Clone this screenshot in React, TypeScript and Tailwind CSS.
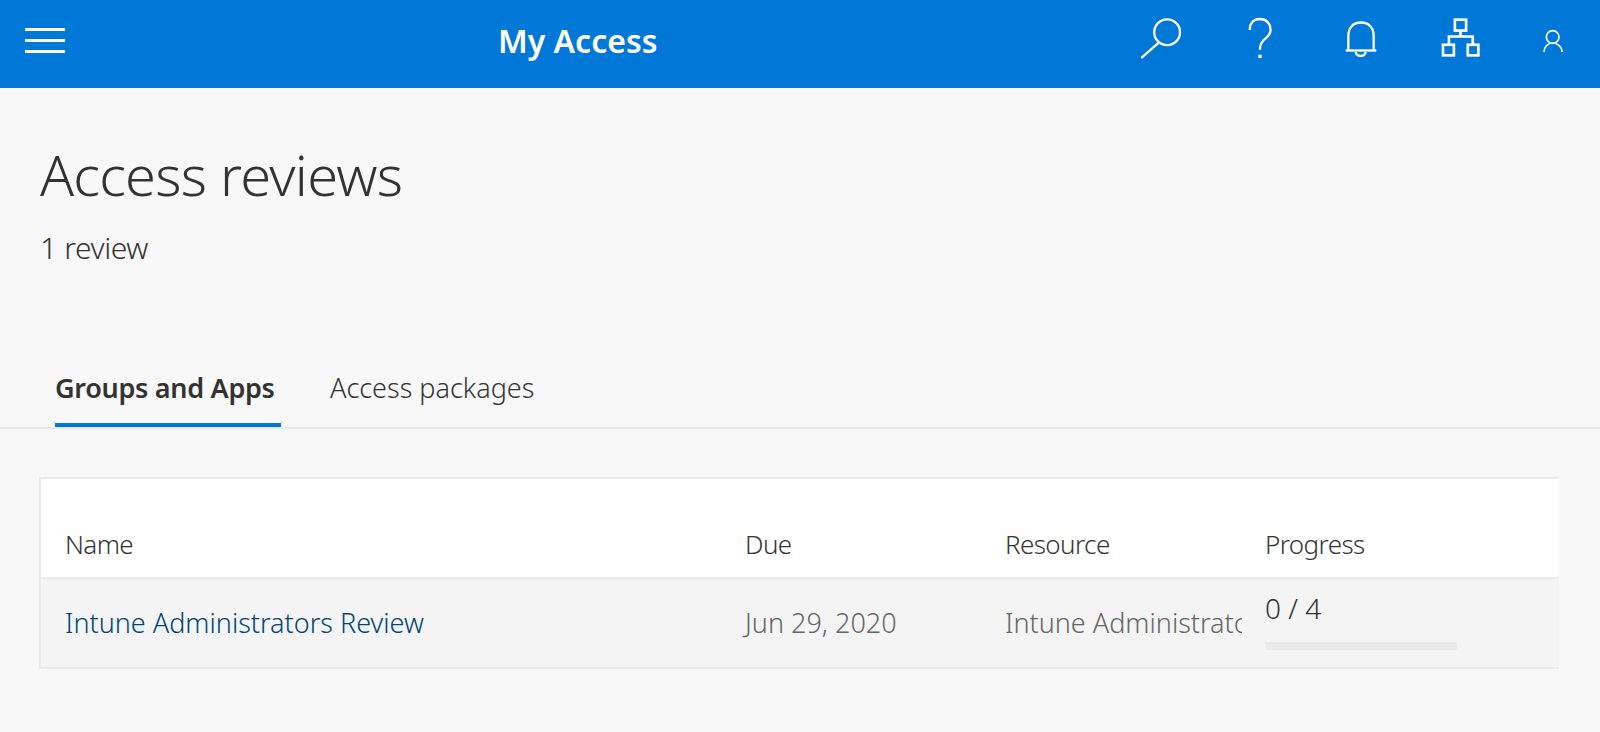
import React from "react";

function MenuIcon() {
  return (
    <div className="flex w-[40px] flex-col gap-[8px]">
      <div className="h-[3px] bg-white" />
      <div className="h-[3px] bg-white" />
      <div className="h-[3px] bg-white" />
    </div>
  );
}

function SearchIcon() {
  return (
    <svg width="43" height="42" viewBox="120 50 130 125" fill="none" stroke="white" strokeWidth="7" strokeLinecap="round">
      <circle cx="202" cy="95" r="39" />
      <path d="M175 128 L126 171" />
    </svg>
  );
}

function HelpIcon() {
  return (
    <svg width="30" height="43" viewBox="435 48 90 130" fill="none" stroke="white" strokeWidth="7">
      <path d="M449 90 C449 68 462 57 480 57 C498 57 512 70 512 90 C512 105 500 112 490 122 C482 130 480 136 480 150" />
      <rect x="475" y="165" width="10" height="10" fill="white" stroke="none" />
    </svg>
  );
}

function BellIcon() {
  return (
    <svg width="32" height="37" viewBox="736 60 96 110" fill="none" stroke="white" strokeWidth="7">
      <path d="M746 148 V105 C746 80 760 64 784 64 C808 64 822 80 822 105 V148" />
      <path d="M738 148 H830" />
      <path d="M768 152 C770 168 796 168 798 152" />
    </svg>
  );
}

function OrgIcon() {
  return (
    <svg width="39" height="39" viewBox="1022 52 116 118" fill="none" stroke="white" strokeWidth="8">
      <rect x="1063" y="57" width="34" height="33" />
      <rect x="1027" y="133" width="33" height="32" />
      <rect x="1102" y="133" width="32" height="32" />
      <path d="M1080 90 V108 M1045 133 V108 H1117 V133" />
    </svg>
  );
}

function UserIcon() {
  return (
    <svg width="22" height="24" viewBox="1326 78 66 72" fill="none" stroke="white" strokeWidth="5">
      <circle cx="1358" cy="102" r="19" />
      <path d="M1332 147 C1332 131 1344 120 1358 120 C1372 120 1386 131 1386 147" />
    </svg>
  );
}

export default function App() {
  return (
    <div className="min-h-[732px] overflow-hidden bg-[#f8f8f8] font-['Noto_Sans',sans-serif] text-[#333333]">
      {/* Top bar */}
      <header className="flex h-[88px] items-center bg-[#0078d7] pb-[7px] pl-[25px] text-white">
        <MenuIcon />
        <div className="ml-[433px] text-[32px] font-semibold">My Access</div>
        <div className="ml-auto flex items-center pb-[6px]">
          <div className="flex w-[100px] justify-center pl-[2px]"><SearchIcon /></div>
          <div className="flex w-[100px] justify-center"><HelpIcon /></div>
          <div className="flex w-[100px] justify-center pl-[2px] pt-[3px]"><BellIcon /></div>
          <div className="flex w-[100px] justify-center"><OrgIcon /></div>
          <div className="flex w-[90px] justify-center pr-[4px] pt-[6px]"><UserIcon /></div>
        </div>
      </header>

      {/* Page title */}
      <div className="pl-[40px] pt-[50px]">
        <h1 className="text-[56px] leading-[72px] font-light tracking-[-0.75px]">Access reviews</h1>
        <p className="mt-[20px] text-[30px] leading-[36px] font-light tracking-[-0.4px]">1 review</p>
      </div>

      {/* Tabs */}
      <div className="mt-[94px] flex h-[69px] border-b-2 border-[#eaeaea] pl-[55px]">
        <div className="h-[67px] w-[226px] border-b-4 border-[#0078d7] pt-[10px] text-[27px] leading-[36px] font-semibold tracking-[-0.3px]">
          Groups and Apps
        </div>
        <div className="ml-[49px] pt-[10px] text-[27px] leading-[36px] font-light">Access packages</div>
      </div>

      {/* Reviews table */}
      <div className="ml-[39px] mr-[41px] mt-[48px] border-y-2 border-l-2 border-[#eaeaea]">
        <div className="grid h-[98px] grid-cols-[680px_260px_260px_1fr] items-end bg-white pb-[15px] pl-[24px] text-[26px] leading-[36px] font-light tracking-[-0.6px]">
          <div>Name</div>
          <div>Due</div>
          <div>Resource</div>
          <div>Progress</div>
        </div>
        <div className="grid h-[90px] grid-cols-[680px_260px_260px_1fr] items-center border-t-2 border-[#eaeaea] bg-[#f4f4f4] pl-[24px] text-[27px] font-light">
          <a className="text-[#004578]">Intune Administrators Review</a>
          <div className="text-[#666666]">Jun 29, 2020</div>
          <div className="w-[237px] overflow-hidden whitespace-nowrap text-[#666666]">Intune Administrators</div>
          <div className="pb-[6px]">
            <div className="text-[28px] leading-[36px]">0 / 4</div>
            <div className="mt-[16px] h-[8px] w-[192px] bg-[#eaeaea]" />
          </div>
        </div>
      </div>
    </div>
  );
}
